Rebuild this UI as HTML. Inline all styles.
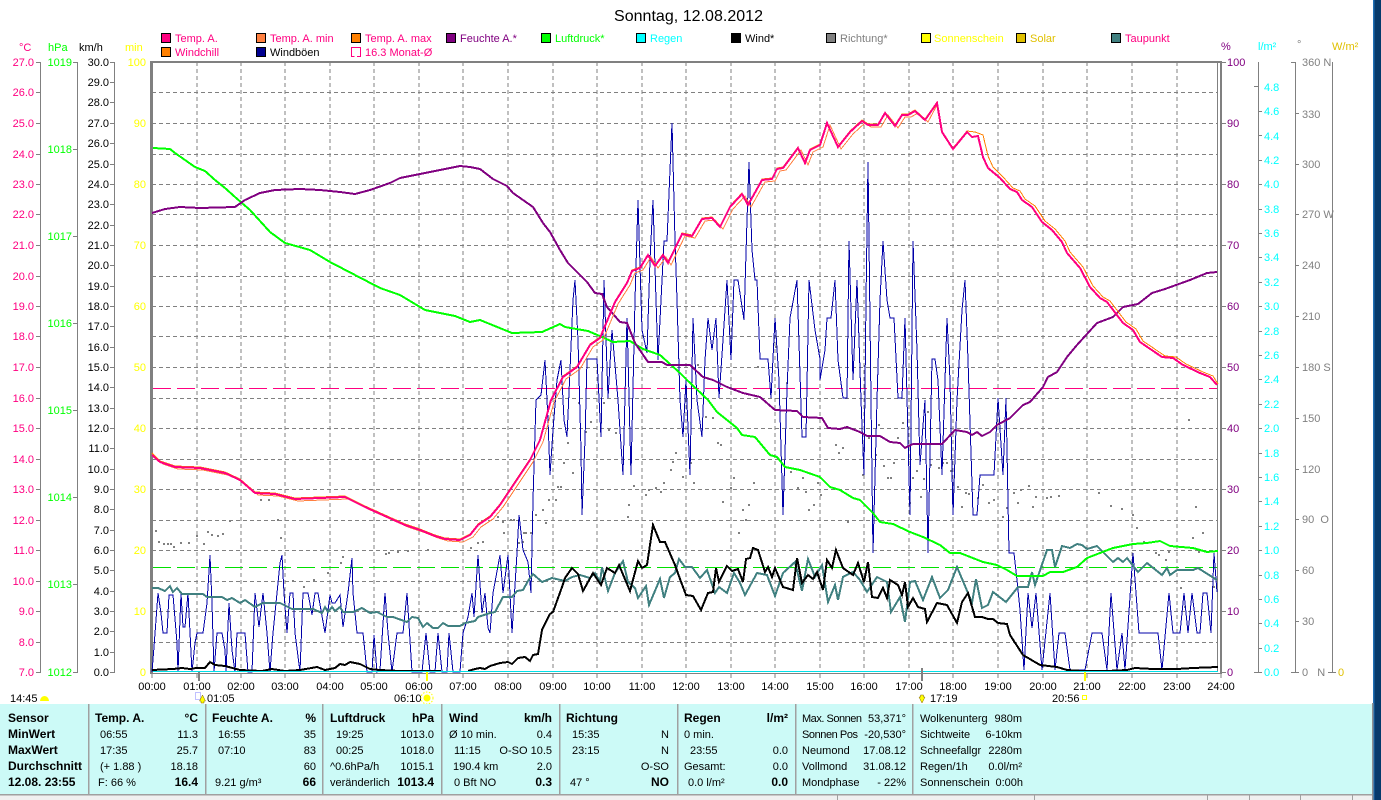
<!DOCTYPE html>
<html><head><meta charset="utf-8"><title>Sonntag, 12.08.2012</title>
<style>
html,body{margin:0;padding:0;background:#fff;overflow:hidden}
svg{display:block;position:absolute;left:0;top:0}
text{font-family:"Liberation Sans",sans-serif;font-size:11px}
text.b{font-weight:bold;font-size:12px}
.l{fill:none;shape-rendering:crispEdges}
</style></head><body>
<svg width="1381" height="800" viewBox="0 0 1381 800" xmlns="http://www.w3.org/2000/svg">
<rect width="1381" height="800" fill="#fff"/>
<rect x="1373" y="0" width="8" height="800" fill="#063a6b"/>
<rect x="1373" y="0" width="1.5" height="800" fill="#1e6fb5"/>

<!-- title -->
<text x="614" y="21" style="font-size:16px" textLength="149">Sonntag, 12.08.2012</text>

<!-- legend -->
<g stroke="#000" stroke-width="1" shape-rendering="crispEdges">
<rect x="161.5" y="33.5" width="9" height="9" fill="#ff0080"/><rect x="256.5" y="33.5" width="9" height="9" fill="#ff8040"/><rect x="351.5" y="33.5" width="9" height="9" fill="#ff8000"/><rect x="446.5" y="33.5" width="9" height="9" fill="#800080"/><rect x="541.5" y="33.5" width="9" height="9" fill="#00ff00"/><rect x="636.5" y="33.5" width="9" height="9" fill="#00ffff"/><rect x="731.5" y="33.5" width="9" height="9" fill="#000"/><rect x="826.5" y="33.5" width="9" height="9" fill="#808080"/><rect x="921.5" y="33.5" width="9" height="9" fill="#ffff00"/><rect x="1016.5" y="33.5" width="9" height="9" fill="#e0c000"/><rect x="1111.5" y="33.5" width="9" height="9" fill="#408080"/>
<rect x="161.5" y="47.5" width="9" height="9" fill="#ff8000"/><rect x="256.5" y="47.5" width="9" height="9" fill="#000090"/>
</g>
<path d="M354.5 56.5H351.5V47.5H360.5V56.5H357" fill="none" stroke="#ff0080" shape-rendering="crispEdges"/>
<g fill="#ff0080">
<text x="175" y="42">Temp. A.</text><text x="270" y="42">Temp. A. min</text><text x="365" y="42">Temp. A. max</text>
<text x="175" y="56">Windchill</text><text x="365" y="56">16.3 Monat-Ø</text><text x="1125" y="42">Taupunkt</text></g>
<text x="270" y="56">Windböen</text>
<text x="460" y="42" fill="#800080">Feuchte A.*</text>
<text x="555" y="42" fill="#00ff00">Luftdruck*</text>
<text x="650" y="42" fill="#00ffff">Regen</text>
<text x="745" y="42">Wind*</text>
<text x="840" y="42" fill="#808080">Richtung*</text>
<text x="934" y="42" fill="#ffff00">Sonnenschein</text>
<text x="1030" y="42" fill="#e0c000">Solar</text>

<!-- axis headers -->
<text x="19" y="51" fill="#ff0080">°C</text><text x="48" y="51" fill="#00ff00">hPa</text><text x="79" y="51">km/h</text><text x="125" y="51" fill="#ffff00">min</text>
<text x="1221" y="50" fill="#800080">%</text><text x="1258" y="50" fill="#00ffff">l/m²</text><text x="1297" y="48" fill="#808080">°</text><text x="1332" y="50" fill="#e0c000">W/m²</text>

<!-- grid -->
<g stroke="#808080" stroke-width="1" stroke-dasharray="4 3" shape-rendering="crispEdges" fill="none">
<path d="M197 62V672M241 62V672M285 62V672M330 62V672M374 62V672M419 62V672M463 62V672M508 62V672M553 62V672M597 62V672M642 62V672M686 62V672M731 62V672M775 62V672M820 62V672M864 62V672M909 62V672M953 62V672M998 62V672M1043 62V672M1087 62V672M1132 62V672M1177 62V672"/>
<path d="M152 92.5H1218M152 123.5H1218M152 154.5H1218M152 184.5H1218M152 214.5H1218M152 245.5H1218M152 276.5H1218M152 306.5H1218M152 336.5H1218M152 367.5H1218M152 398.5H1218M152 428.5H1218M152 459.5H1218M152 489.5H1218M152 520.5H1218M152 550.5H1218M152 581.5H1218M152 611.5H1218M152 642.5H1218"/>
</g>

<!-- reference lines -->
<path d="M153 388.5H1218" stroke="#ff0080" stroke-dasharray="18 6" fill="none" shape-rendering="crispEdges"/>
<path d="M153 567.5H1218" stroke="#00e000" stroke-dasharray="18 6" fill="none" shape-rendering="crispEdges"/>

<!-- frame -->
<g shape-rendering="crispEdges" fill="#808080">
<rect x="150" y="61" width="1072" height="2"/>
<rect x="150" y="61" width="3" height="612"/>
<rect x="1217" y="62" width="1" height="610"/>
<rect x="1220" y="62" width="2" height="611"/>
<rect x="150" y="673" width="1072" height="1"/>
</g>

<!-- dots -->
<path d="M155 531h2M158 542h2M163 544h2M167 544h2M170 544h2M173 547h2M180 543h2M188 543h2M196 536h2M203 544h2M207 532h2M211 535h2M217 536h2M222 534h2M229 521h2M260 500h2M268 500h2M277 520h2M280 538h2M292 581h2M303 587h2M313 580h2M327 573h2M340 563h2M342 557h2M385 554h2M388 553h2M397 552h2M407 551h2M427 550h2M470 548h2M477 543h2M482 542h2M497 517h2M502 522h2M503 533h2M510 520h2M513 520h2M518 543h2M522 542h2M523 533h2M525 533h2M530 533h2M535 515h2M542 510h2M545 523h2M548 500h2M555 500h2M557 487h2M560 487h2M563 463h2M567 443h2M572 473h2M578 403h2M585 432h2M590 422h2M603 403h2M608 430h2M615 433h2M627 517h2M628 505h2M633 486h2M645 495h2M648 490h2M655 488h2M660 492h2M663 483h2M670 470h2M672 462h2M675 453h2M682 477h2M690 463h2M693 483h2M697 365h2M705 417h2M712 418h2M717 443h2M720 445h2M722 502h2M730 488h2M733 478h2M738 533h2M742 510h2M745 520h2M748 505h2M753 483h2M757 367h2M775 347h2M786 383h2M790 472h2M797 488h2M802 478h2M805 492h2M808 510h2M813 505h2M817 483h2M820 495h2M835 445h2M838 453h2M842 448h2M847 522h2M862 475h2M868 438h2M875 455h2M878 425h2M883 466h2M887 478h2M890 478h2M893 463h2M897 438h2M902 423h2M909 503h2M912 478h2M916 471h2M920 497h2M923 479h2M927 412h2M930 465h2M938 468h2M942 463h2M946 463h2M950 471h2M957 487h2M961 507h2M965 493h2M968 494h2M977 498h2M982 485h2M988 503h2M993 500h2M1002 517h2M1006 508h2M1013 493h2M1017 503h2M1020 490h2M1028 486h2M1032 507h2M1035 497h2M1046 498h2M1050 497h2M1058 496h2M1098 493h2M1110 506h2M1121 509h2M1132 515h2M1136 528h2M1143 542h2M1155 553h2M1158 555h2M1165 560h2M1168 552h2M1180 588h2M1184 607h2M1188 420h2M1192 538h2M1195 507h2M1198 552h2M1202 533h2M1213 587h2" stroke="#808080" stroke-width="2" fill="none" shape-rendering="crispEdges"/>

<!-- gusts -->
<polyline class="l" stroke="#0000a8" stroke-width="1" points="152,672 154,647 158,593 161,613 163,633 167,633 169,595 173,595 177,643 178,672 181,593 183,627 185,627 188,593 192,672 195,643 197,633 203,633 207,603 210,555 212,603 214,672 217,633 222,633 225,650 226,672 229,603 232,650 235,672 237,633 245,633 248,672 252,672 255,593 259,627 263,593 267,633 270,672 273,633 277,593 280,563 282,555 284,593 287,633 290,593 293,593 295,633 300,672 303,593 308,593 312,615 315,593 318,593 325,633 330,595 332,603 335,603 340,595 343,627 348,593 352,558 353,593 357,633 363,633 367,672 372,672 374,635 377,672 380,670 385,593 388,633 392,672 397,633 403,633 407,593 412,672 422,672 426,633 430,672 435,672 438,633 442,672 447,672 449,633 453,672 460,672 463,633 468,617 472,593 474,617 478,555 482,613 485,593 488,628 490,633 493,593 500,555 503,593 508,555 512,633 517,553 519,515 523,550 528,562 531,593 533,500 536,400 541,395 545,360 548,420 550,475 553,430 557,380 561,360 564,420 567,437 570,370 573,300 575,280 578,340 581,450 582,515 585,440 587,359 597,359 601,437 604,280 608,398 612,330 618,400 623,475 627,318 631,475 635,300 638,200 642,330 647,353 650,260 653,200 656,300 658,360 661,300 664,241 667,241 670,170 672,123 675,240 677,300 680,400 683,437 686,380 690,475 693,318 697,400 702,437 705,360 708,318 712,350 716,318 719,398 723,340 727,280 731,360 734,280 738,280 744,320 747,220 749,162 752,250 755,280 757,280 760,359 768,359 771,398 775,318 779,380 783,515 787,390 790,318 797,280 802,437 806,437 809,280 815,330 820,359 820,380 825,350 827,318 831,318 835,280 838,360 843,398 847,398 849,241 853,380 857,280 861,400 864,475 866,300 868,162 871,400 873,553 877,400 880,300 883,241 887,300 890,318 894,318 898,398 902,398 905,318 910,515 913,241 917,350 920,465 925,400 928,553 932,359 935,359 938,380 942,475 947,318 950,380 953,515 957,400 962,310 965,280 968,360 973,515 977,515 980,475 994,475 998,398 1003,475 1006,398 1009,553 1014,553 1017,580 1020,610 1024,670 1028,593 1032,628 1036,593 1042,670 1050,593 1055,670 1059,633 1065,633 1070,670 1085,670 1092,633 1102,633 1107,670 1111,593 1117,670 1122,633 1125,670 1133,553 1139,633 1158,633 1162,670 1169,593 1173,633 1180,633 1184,593 1188,633 1192,593 1197,633 1200,633 1203,593 1207,593 1211,633 1214,553 1217,592"/>

<!-- dew point -->
<polyline class="l" stroke="#408080" stroke-width="2" points="152,588 158,588 165,591 170,586 173,592 177,588 182,594 203,594 207,597 222,597 227,600 232,598 240,603 245,600 255,607 263,603 280,603 292,609 313,609 322,613 325,607 328,612 332,607 335,611 340,607 343,612 353,612 362,608 370,613 377,612 387,617 393,617 407,622 412,617 418,618 423,627 427,623 433,628 438,628 443,623 448,626 460,626 465,623 475,621 478,617 490,613 495,612 503,597 512,597 517,591 523,590 528,581 533,574 542,582 552,578 565,581 572,577 580,575 590,578 595,573 600,582 602,567 608,591 615,573 623,561 628,582 635,588 638,598 646,586 649,605 660,579 664,598 670,577 675,573 679,559 685,567 692,567 700,578 707,570 715,593 719,587 727,593 734,573 740,583 745,595 757,573 767,575 775,596 783,573 795,562 802,591 808,559 815,577 822,565 828,602 835,585 838,600 843,577 853,572 860,580 867,592 877,577 887,582 891,612 900,597 905,622 910,582 915,581 923,600 932,577 940,598 948,590 957,567 968,593 972,603 976,579 982,608 988,605 993,592 1006,602 1018,587 1028,587 1032,572 1035,585 1047,550 1052,550 1055,567 1062,546 1070,548 1077,544 1082,545 1087,549 1097,546 1113,562 1118,558 1123,562 1127,558 1138,572 1147,563 1162,575 1167,568 1170,575 1177,570 1193,570 1198,568 1217,580"/>

<!-- pressure -->
<polyline class="l" stroke="#00ff00" stroke-width="2" points="153,148 170,149 175,153 185,160 195,167 205,171 215,180 225,188 235,197 250,210 270,232 285,243 310,250 330,262 355,275 380,288 400,295 425,310 455,316 470,322 480,320 512,333 542,332 560,324 565,327 588,331 602,337 613,342 630,341 643,349 660,355 680,373 687,380 708,400 717,412 737,428 742,435 755,437 770,455 777,457 785,467 800,470 820,477 830,487 840,490 853,498 860,500 873,513 880,522 893,524 910,532 923,537 940,545 950,553 960,553 983,562 997,565 1007,570 1017,576 1043,576 1050,572 1063,572 1077,567 1087,558 1113,548 1133,544 1147,543 1160,541 1170,546 1193,548 1207,552 1218,551"/>

<!-- humidity -->
<polyline class="l" stroke="#800080" stroke-width="2" points="152,213 165,209 180,207 200,208 235,207 245,200 260,193 275,190 300,189 320,190 340,192 355,194 370,190 390,183 400,178 420,174 440,170 460,166 470,167 480,169 493,179 507,186 513,193 533,207 543,223 550,232 560,250 568,263 587,282 595,293 602,294 607,307 620,322 627,323 635,343 648,362 662,362 667,365 690,365 703,377 713,380 727,387 743,393 760,397 775,410 797,411 803,417 822,418 828,428 840,429 847,427 860,432 867,436 880,436 890,442 900,443 905,448 913,444 942,444 955,430 967,432 972,435 977,432 982,436 990,432 997,425 1010,418 1023,405 1030,402 1043,387 1048,377 1057,372 1067,357 1077,345 1097,323 1113,317 1123,307 1138,304 1152,293 1165,289 1190,280 1207,273 1217,272"/>

<!-- temperature: min, max, main -->
<g transform="translate(3,2)"><polyline class="l" stroke="#ff8040" stroke-width="1" points="152,455 160,462 175,467 200,468 225,473 240,480 255,493 275,494 295,499 320,498 345,497 365,507 385,516 405,525 420,530 435,536 445,539 460,540 470,535 478,525 490,517 500,505 510,490 520,475 530,460 540,440 551,400 563,377 577,367 590,345 600,338 615,302 627,283 632,271 640,268 648,255 655,266 663,255 668,263 682,234 692,236 702,219 712,218 720,227 730,207 742,194 748,205 762,180 772,179 777,169 783,168 798,148 805,163 810,150 820,145 827,123 838,147 850,132 862,121 868,125 878,125 885,113 895,126 902,115 908,115 915,111 925,120 934,103"/></g>
<g transform="translate(0,-1)"><polyline class="l" stroke="#ff8000" stroke-width="1" points="152,454 160,462 175,467 200,468 225,473 240,480 255,493 275,494 295,499 320,498 345,497 365,507 385,516 405,525 420,530 435,536 445,539 460,540 470,535 478,525 490,517 500,505 510,490 520,475 530,460 540,440 551,400 563,377 577,367 590,345 600,338 615,302 627,283 632,271 640,268 648,255 655,266 663,255 668,263 682,234 692,236 702,219 712,218 720,227 730,207 742,194 748,205 762,180 772,179 777,169 783,168 798,148 805,163 810,150 820,145 827,123 838,147 850,132 862,121 868,125 878,125 885,113 895,126 902,115 908,115 915,111 925,120 937,103"/></g>
<g transform="translate(3,-1)"><polyline class="l" stroke="#ff8000" stroke-width="1" points="934,103 939,132 950,149 964,132 972,133 980,136 985,157 990,168 1000,178 1010,189 1017,192 1022,200 1032,207 1042,222 1052,230 1062,242 1067,253 1080,268 1090,287 1100,298 1107,302 1123,323 1133,330 1140,342 1162,357 1173,358 1183,365 1200,373 1210,377 1215,385"/></g>
<polyline class="l" stroke="#ff0080" stroke-width="2" points="152,455 160,462 175,467 200,468 225,473 240,480 255,493 275,494 295,499 320,498 345,497 365,507 385,516 405,525 420,530 435,536 445,539 460,540 470,535 478,525 490,517 500,505 510,490 520,475 530,460 540,440 551,400 563,377 577,367 590,345 600,338 615,302 627,283 632,271 640,268 648,255 655,266 663,255 668,263 682,234 692,236 702,219 712,218 720,227 730,207 742,194 748,205 762,180 772,179 777,169 783,168 798,148 805,163 810,150 820,145 827,123 838,147 850,132 862,121 868,125 878,125 885,113 895,126 902,115 908,115 915,111 925,120 937,103 942,132 953,149 967,132 972,137 978,136 983,157 988,168 1000,178 1010,189 1017,192 1022,200 1032,207 1042,222 1052,230 1062,242 1067,253 1080,268 1090,287 1100,298 1107,302 1123,323 1133,330 1140,342 1162,357 1173,358 1183,365 1200,373 1210,377 1217,385"/>

<!-- wind -->
<polyline class="l" stroke="#000" stroke-width="2" points="152,670 173,669 182,668 190,669 196,668 205,668 210,662 215,665 225,666 240,670 262,671 272,669 285,671 300,670 317,667 325,670 335,668 340,664 345,665 350,662 360,664 370,669 380,670 400,671 441,671"/>
<polyline class="l" stroke="#000" stroke-width="2" points="468,671 475,669 480,668 485,669 490,666 500,663 508,662 512,664 518,658 525,657 530,661 533,655 538,654 542,630 550,614 553,612 562,587 565,578 572,568 578,574 583,591 593,573 601,585 607,568 615,573 619,565 630,591 638,561 642,568 647,565 653,525 660,542 665,542 675,565 680,579 686,595 693,596 701,610 708,593 713,592 716,568 719,582 727,566 732,571 738,569 743,582 746,559 750,558 753,548 758,550 765,572 768,567 772,577 775,568 783,587 793,590 797,558 802,583 808,575 813,579 817,572 823,590 827,560 832,568 836,550 843,568 853,575 858,563 864,582 868,562 872,597 878,598 883,588 887,598 890,580 898,585 902,595 905,582 908,607 913,598 918,607 925,609 927,622 937,603 947,605 957,623 962,602 968,593 975,617 982,617 988,619 993,619 998,623 1007,624 1010,635 1023,655 1040,665 1057,667 1067,670 1083,671 1107,671 1127,670 1135,668 1153,669 1177,669 1193,668 1218,667"/>

<!-- bottom cyan line -->
<rect x="153" y="671" width="1065" height="1" fill="#00e0e8" shape-rendering="crispEdges"/>

<!-- left axes -->
<g fill="#808080" shape-rendering="crispEdges">
<rect x="40" y="62" width="1" height="610"/><rect x="77" y="62" width="1" height="610"/><rect x="114" y="62" width="1" height="610"/>
<rect x="1258" y="62" width="1" height="610"/><rect x="1295" y="62" width="1" height="610"/><rect x="1332" y="62" width="1" height="610"/>
<path d="M36 62h5v1h-5zM36 92h5v1h-5zM36 123h5v1h-5zM36 154h5v1h-5zM36 184h5v1h-5zM36 214h5v1h-5zM36 245h5v1h-5zM36 276h5v1h-5zM36 306h5v1h-5zM36 336h5v1h-5zM36 367h5v1h-5zM36 398h5v1h-5zM36 428h5v1h-5zM36 459h5v1h-5zM36 489h5v1h-5zM36 520h5v1h-5zM36 550h5v1h-5zM36 581h5v1h-5zM36 611h5v1h-5zM36 642h5v1h-5zM36 672h5v1h-5z"/>
<path d="M73 62h5v1h-5zM73 149h5v1h-5zM73 236h5v1h-5zM73 323h5v1h-5zM73 410h5v1h-5zM73 497h5v1h-5zM73 584h5v1h-5zM73 672h5v1h-5z"/>
<path d="M110 62h5v1h-5zM110 82h5v1h-5zM110 102h5v1h-5zM110 123h5v1h-5zM110 143h5v1h-5zM110 164h5v1h-5zM110 184h5v1h-5zM110 204h5v1h-5zM110 225h5v1h-5zM110 245h5v1h-5zM110 265h5v1h-5zM110 286h5v1h-5zM110 306h5v1h-5zM110 326h5v1h-5zM110 347h5v1h-5zM110 367h5v1h-5zM110 387h5v1h-5zM110 408h5v1h-5zM110 428h5v1h-5zM110 448h5v1h-5zM110 469h5v1h-5zM110 489h5v1h-5zM110 509h5v1h-5zM110 530h5v1h-5zM110 550h5v1h-5zM110 570h5v1h-5zM110 591h5v1h-5zM110 611h5v1h-5zM110 631h5v1h-5zM110 652h5v1h-5zM110 672h5v1h-5z"/>
<path d="M1222 62h4v1h-4zM1222 123h4v1h-4zM1222 184h4v1h-4zM1222 245h4v1h-4zM1222 306h4v1h-4zM1222 367h4v1h-4zM1222 428h4v1h-4zM1222 489h4v1h-4zM1222 550h4v1h-4zM1222 611h4v1h-4zM1222 672h4v1h-4z"/>
<path d="M1254 86h4v1h-4zM1258 111h4v1h-4zM1258 135h4v1h-4zM1258 160h4v1h-4zM1258 184h4v1h-4zM1258 209h4v1h-4zM1258 233h4v1h-4zM1258 257h4v1h-4zM1258 282h4v1h-4zM1258 306h4v1h-4zM1258 331h4v1h-4zM1258 355h4v1h-4zM1258 379h4v1h-4zM1258 404h4v1h-4zM1258 428h4v1h-4zM1258 453h4v1h-4zM1258 477h4v1h-4zM1258 501h4v1h-4zM1258 526h4v1h-4zM1258 550h4v1h-4zM1258 575h4v1h-4zM1258 599h4v1h-4zM1258 623h4v1h-4zM1258 648h4v1h-4zM1254 672h8v1h-8z"/>
<path d="M1291 62h4v1h-4zM1295 113h4v1h-4zM1295 164h4v1h-4zM1295 214h4v1h-4zM1295 265h4v1h-4zM1295 316h4v1h-4zM1295 367h4v1h-4zM1295 418h4v1h-4zM1295 469h4v1h-4zM1295 519h4v1h-4zM1295 570h4v1h-4zM1295 621h4v1h-4zM1291 672h8v1h-8zM1328 672h8v1h-8z"/>
</g>

<g fill="#ff0080" style="text-anchor:end">
<text x="34" y="66">27.0</text><text x="34" y="96">26.0</text><text x="34" y="127">25.0</text><text x="34" y="158">24.0</text><text x="34" y="188">23.0</text><text x="34" y="218">22.0</text><text x="34" y="249">21.0</text><text x="34" y="280">20.0</text><text x="34" y="310">19.0</text><text x="34" y="340">18.0</text><text x="34" y="371">17.0</text><text x="34" y="402">16.0</text><text x="34" y="432">15.0</text><text x="34" y="463">14.0</text><text x="34" y="493">13.0</text><text x="34" y="524">12.0</text><text x="34" y="554">11.0</text><text x="34" y="585">10.0</text><text x="34" y="615">9.0</text><text x="34" y="646">8.0</text><text x="34" y="676">7.0</text>
</g>
<g fill="#00ff00" style="text-anchor:end">
<text x="72" y="66">1019</text><text x="72" y="153">1018</text><text x="72" y="240">1017</text><text x="72" y="327">1016</text><text x="72" y="414">1015</text><text x="72" y="501">1014</text><text x="72" y="588">1013</text><text x="72" y="676">1012</text>
</g>
<g style="text-anchor:end">
<text x="109" y="66">30.0</text><text x="109" y="86">29.0</text><text x="109" y="106">28.0</text><text x="109" y="127">27.0</text><text x="109" y="147">26.0</text><text x="109" y="168">25.0</text><text x="109" y="188">24.0</text><text x="109" y="208">23.0</text><text x="109" y="229">22.0</text><text x="109" y="249">21.0</text><text x="109" y="269">20.0</text><text x="109" y="290">19.0</text><text x="109" y="310">18.0</text><text x="109" y="330">17.0</text><text x="109" y="351">16.0</text><text x="109" y="371">15.0</text><text x="109" y="391">14.0</text><text x="109" y="412">13.0</text><text x="109" y="432">12.0</text><text x="109" y="452">11.0</text><text x="109" y="473">10.0</text><text x="109" y="493">9.0</text><text x="109" y="513">8.0</text><text x="109" y="534">7.0</text><text x="109" y="554">6.0</text><text x="109" y="574">5.0</text><text x="109" y="595">4.0</text><text x="109" y="615">3.0</text><text x="109" y="635">2.0</text><text x="109" y="656">1.0</text><text x="109" y="676">0.0</text>
</g>
<g fill="#ffff00" style="text-anchor:end">
<text x="146" y="66">100</text><text x="146" y="127">90</text><text x="146" y="188">80</text><text x="146" y="249">70</text><text x="146" y="310">60</text><text x="146" y="371">50</text><text x="146" y="432">40</text><text x="146" y="493">30</text><text x="146" y="554">20</text><text x="146" y="615">10</text><text x="146" y="676">0</text>
</g>

<!-- right axes -->
<g fill="#800080">
<text x="1227" y="66">100</text><text x="1227" y="127">90</text><text x="1227" y="188">80</text><text x="1227" y="249">70</text><text x="1227" y="310">60</text><text x="1227" y="371">50</text><text x="1227" y="432">40</text><text x="1227" y="493">30</text><text x="1227" y="554">20</text><text x="1227" y="615">10</text><text x="1227" y="676">0</text>
</g>
<g fill="#00ffff">
<text x="1264" y="91">4.8</text><text x="1264" y="115">4.6</text><text x="1264" y="140">4.4</text><text x="1264" y="164">4.2</text><text x="1264" y="188">4.0</text><text x="1264" y="213">3.8</text><text x="1264" y="237">3.6</text><text x="1264" y="261">3.4</text><text x="1264" y="286">3.2</text><text x="1264" y="310">3.0</text><text x="1264" y="335">2.8</text><text x="1264" y="359">2.6</text><text x="1264" y="383">2.4</text><text x="1264" y="408">2.2</text><text x="1264" y="432">2.0</text><text x="1264" y="457">1.8</text><text x="1264" y="481">1.6</text><text x="1264" y="505">1.4</text><text x="1264" y="530">1.2</text><text x="1264" y="554">1.0</text><text x="1264" y="579">0.8</text><text x="1264" y="603">0.6</text><text x="1264" y="627">0.4</text><text x="1264" y="652">0.2</text><text x="1264" y="676">0.0</text>
</g>
<g fill="#808080">
<text x="1302" y="66">360 N</text><text x="1302" y="118">330</text><text x="1302" y="168">300</text><text x="1302" y="218">270 W</text><text x="1302" y="269">240</text><text x="1302" y="320">210</text><text x="1302" y="371">180 S</text><text x="1302" y="422">150</text><text x="1302" y="473">120</text><text x="1302" y="523">90&#160;&#160;O</text><text x="1302" y="574">60</text><text x="1302" y="625">30</text><text x="1302" y="676">0&#160;&#160;&#160;N</text>
</g>
<text x="1338" y="676" fill="#e0c000">0</text>

<!-- x ticks -->
<path d="M152 673v5M197 673v5M241 673v5M285 673v5M330 673v5M374 673v5M419 673v5M463 673v5M508 673v5M553 673v5M597 673v5M642 673v5M686 673v5M731 673v5M775 673v5M820 673v5M864 673v5M909 673v5M953 673v5M998 673v5M1043 673v5M1087 673v5M1132 673v5M1177 673v5M1221 673v5" stroke="#808080" shape-rendering="crispEdges"/>
<g shape-rendering="crispEdges">
<rect x="198" y="672" width="2" height="9" fill="#808080"/><rect x="921" y="668" width="2" height="13" fill="#808080"/>
<rect x="426" y="672" width="2" height="9" fill="#ffff00"/><rect x="1084" y="672" width="2" height="9" fill="#ffff00"/>
</g>
<g style="text-anchor:middle">
<text x="152" y="690">00:00</text><text x="197" y="690">01:00</text><text x="241" y="690">02:00</text><text x="285" y="690">03:00</text><text x="330" y="690">04:00</text><text x="374" y="690">05:00</text><text x="419" y="690">06:00</text><text x="463" y="690">07:00</text><text x="508" y="690">08:00</text><text x="553" y="690">09:00</text><text x="597" y="690">10:00</text><text x="642" y="690">11:00</text><text x="686" y="690">12:00</text><text x="731" y="690">13:00</text><text x="775" y="690">14:00</text><text x="820" y="690">15:00</text><text x="864" y="690">16:00</text><text x="909" y="690">17:00</text><text x="953" y="690">18:00</text><text x="998" y="690">19:00</text><text x="1043" y="690">20:00</text><text x="1087" y="690">21:00</text><text x="1132" y="690">22:00</text><text x="1177" y="690">23:00</text><text x="1221" y="690">24:00</text>
</g>

<!-- astro markers -->
<text x="10" y="702">14:45</text>
<path d="M40 701a4.5 5 0 0 1 9 0z" fill="#ffff00"/>
<rect x="195.5" y="692.5" width="5" height="7" fill="none" stroke="#8080ff" stroke-dasharray="1 1"/>
<path d="M202.5 695l3 6h-1.5v2h-3v-2h-1.5z" fill="#ffff00" stroke="#806000" stroke-width=".5"/>
<text x="207" y="702">01:05</text>
<text x="394" y="702">06:10</text>
<circle cx="427" cy="698" r="3.5" fill="#ffff00"/><circle cx="427" cy="698" r="6" fill="none" stroke="#ffff00" stroke-width="1" stroke-dasharray="1.5 1.5"/>
<path d="M922 703l-3-6h1.5v-2h3v2h1.5z" fill="#ffff00" stroke="#806000" stroke-width=".5"/>
<text x="930" y="702">17:19</text>
<text x="1052" y="702">20:56</text>
<rect x="1082.5" y="695.5" width="4" height="4" fill="none" stroke="#ffff00"/>

<!-- panel -->
<rect x="0" y="704" width="1372" height="90" fill="#ccfaf7"/>
<rect x="1372" y="703" width="1.5" height="97" fill="#909090"/>
<g fill="#a0a0a0" shape-rendering="crispEdges">
<rect x="88" y="704" width="1.5" height="90"/><rect x="205" y="704" width="1.5" height="90"/><rect x="322" y="704" width="1.5" height="90"/><rect x="441" y="704" width="1.5" height="90"/><rect x="559" y="704" width="1.5" height="90"/><rect x="677" y="704" width="1.5" height="90"/><rect x="795" y="704" width="1.5" height="90"/><rect x="912" y="704" width="1.5" height="90"/>
<rect x="0" y="794" width="1372" height="1.5"/>
</g>
<rect x="0" y="795.5" width="1372" height="4.5" fill="#f0f0f0"/>
<g fill="#a0a0a0" shape-rendering="crispEdges">
<rect x="837" y="795" width="1" height="5"/><rect x="1034" y="795" width="1" height="5"/><rect x="1207" y="795" width="1" height="5"/><rect x="1249" y="795" width="1" height="5"/><rect x="1300" y="795" width="1" height="5"/><rect x="1352" y="795" width="1" height="5"/>
</g>

<g>
<text class="b" x="8" y="722">Sensor</text><text class="b" x="8" y="738">MinWert</text><text class="b" x="8" y="754">MaxWert</text><text class="b" x="8" y="770">Durchschnitt</text><text class="b" x="8" y="786">12.08. 23:55</text>

<text class="b" x="95" y="722">Temp. A.</text><text class="b" x="198" y="722" style="text-anchor:end">°C</text>
<text x="100" y="738">06:55</text><text x="198" y="738" style="text-anchor:end">11.3</text>
<text x="100" y="754">17:35</text><text x="198" y="754" style="text-anchor:end">25.7</text>
<text x="100" y="770">(+ 1.88 )</text><text x="198" y="770" style="text-anchor:end">18.18</text>
<text x="98" y="786">F: 66 %</text><text class="b" x="198" y="786" style="text-anchor:end">16.4</text>

<text class="b" x="212" y="722">Feuchte A.</text><text class="b" x="316" y="722" style="text-anchor:end">%</text>
<text x="218" y="738">16:55</text><text x="316" y="738" style="text-anchor:end">35</text>
<text x="218" y="754">07:10</text><text x="316" y="754" style="text-anchor:end">83</text>
<text x="316" y="770" style="text-anchor:end">60</text>
<text x="215" y="786">9.21 g/m³</text><text class="b" x="316" y="786" style="text-anchor:end">66</text>

<text class="b" x="330" y="722">Luftdruck</text><text class="b" x="434" y="722" style="text-anchor:end">hPa</text>
<text x="336" y="738">19:25</text><text x="434" y="738" style="text-anchor:end">1013.0</text>
<text x="336" y="754">00:25</text><text x="434" y="754" style="text-anchor:end">1018.0</text>
<text x="330" y="770">^0.6hPa/h</text><text x="434" y="770" style="text-anchor:end">1015.1</text>
<text x="330" y="786">veränderlich</text><text class="b" x="434" y="786" style="text-anchor:end">1013.4</text>

<text class="b" x="449" y="722">Wind</text><text class="b" x="552" y="722" style="text-anchor:end">km/h</text>
<text x="449" y="738">Ø 10 min.</text><text x="552" y="738" style="text-anchor:end">0.4</text>
<text x="454" y="754">11:15</text><text x="552" y="754" style="text-anchor:end">O-SO 10.5</text>
<text x="453" y="770">190.4 km</text><text x="552" y="770" style="text-anchor:end">2.0</text>
<text x="454" y="786">0 Bft NO</text><text class="b" x="552" y="786" style="text-anchor:end">0.3</text>

<text class="b" x="566" y="722">Richtung</text>
<text x="572" y="738">15:35</text><text x="669" y="738" style="text-anchor:end">N</text>
<text x="572" y="754">23:15</text><text x="669" y="754" style="text-anchor:end">N</text>
<text x="669" y="770" style="text-anchor:end">O-SO</text>
<text x="570" y="786">47 °</text><text class="b" x="669" y="786" style="text-anchor:end">NO</text>

<text class="b" x="684" y="722">Regen</text><text class="b" x="788" y="722" style="text-anchor:end">l/m²</text>
<text x="684" y="738">0 min.</text>
<text x="690" y="754">23:55</text><text x="788" y="754" style="text-anchor:end">0.0</text>
<text x="684" y="770">Gesamt:</text><text x="788" y="770" style="text-anchor:end">0.0</text>
<text x="688" y="786">0.0 l/m²</text><text class="b" x="788" y="786" style="text-anchor:end">0.0</text>

<text x="802" y="722" textLength="60">Max. Sonnen</text><text x="906" y="722" style="text-anchor:end">53,371°</text>
<text x="802" y="738" textLength="56">Sonnen Pos</text><text x="906" y="738" style="text-anchor:end">-20,530°</text>
<text x="802" y="754">Neumond</text><text x="906" y="754" style="text-anchor:end">17.08.12</text>
<text x="802" y="770">Vollmond</text><text x="906" y="770" style="text-anchor:end">31.08.12</text>
<text x="802" y="786">Mondphase</text><text x="906" y="786" style="text-anchor:end">- 22%</text>

<text x="920" y="722">Wolkenunterg</text><text x="1022" y="722" style="text-anchor:end">980m</text>
<text x="920" y="738">Sichtweite</text><text x="1022" y="738" style="text-anchor:end">6-10km</text>
<text x="920" y="754">Schneefallgr</text><text x="1022" y="754" style="text-anchor:end">2280m</text>
<text x="920" y="770">Regen/1h</text><text x="1022" y="770" style="text-anchor:end">0.0l/m²</text>
<text x="920" y="786">Sonnenschein</text><text x="1023" y="786" style="text-anchor:end">0:00h</text>
</g>
</svg>
</body></html>
